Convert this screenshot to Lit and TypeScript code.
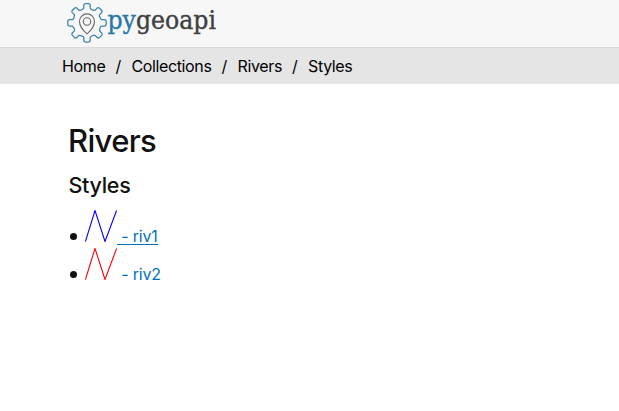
import { LitElement, html, css, svg } from "lit";
import { customElement } from "lit/decorators.js";

// One tooth of the cog plus the arc to the next; repeated eight times.
const cogPath = (() => {
  const pt = (x: number, y: number, a: number) => {
    const c = Math.cos(a), s = Math.sin(a);
    return `${(x * c - y * s).toFixed(2)} ${(x * s + y * c).toFixed(2)}`;
  };
  let d = "";
  for (let i = 0; i < 8; i++) {
    const a = (i * Math.PI) / 4;
    const p = (x: number, y: number) => pt(x, y, a);
    d += `${i ? "L" : "M"}${p(-3.2, -14.6)}L${p(-3.2, -17.6)}Q${p(-3.1, -19)} ${p(-1.8, -19.2)}L${p(1.8, -19.2)}Q${p(3.1, -19)} ${p(3.2, -17.6)}L${p(3.2, -14.6)}Q${p(3.4, -13.4)} ${p(5.4, -13)}`;
    d += `Q${p(7.2, -12.4)} ${pt(-3.2, -14.6, a + Math.PI / 4)}`;
  }
  return d + "Z";
})();

@customElement("app-root")
export class AppRoot extends LitElement {
  static styles = css`
    :host { display: block; height: 411px; overflow: hidden; background: #fff; color: #111; font-family: Inter, "Open Sans", sans-serif; font-size: 16px; }
    .header { height: 47px; box-sizing: border-box; padding-left: 64px; background: #f7f7f7; }
    .logo { display: block; }
    .logotype { font: 26px "DejaVu Serif", serif; stroke-width: 0.4px; }
    .py { fill: #2878a8; stroke: #2878a8; }
    .geo { fill: #404040; stroke: #404040; }
    .crumbs { display: flex; height: 37px; box-sizing: border-box; border-top: 1px solid #dadada; padding: 0 0 0 62px; background: #e5e5e5; color: #000; line-height: 37px; white-space: pre; }
    .crumb { margin-right: 10px; letter-spacing: -0.36px; }
    .sep { width: 6px; margin-right: 10px; }
    main { padding: 39px 0 0 69px; }
    h1 { margin: 0 0 0 -1px; font-size: 31px; font-weight: 450; line-height: 36px; letter-spacing: -0.65px; }
    h2 { margin: 13px 0 0 -0.5px; font-size: 21.5px; font-weight: 500; line-height: 26px; letter-spacing: -0.3px; }
    ul { list-style: none; margin: 12px 0 0; padding: 0; }
    li { display: flex; height: 38px; align-items: flex-start; }
    .dot { width: 7px; height: 7px; border-radius: 50%; background: #111; margin: 23px 8px 0 1px; }
    .line { display: block; width: 32px; height: 32px; }
    a { color: #0071b8; line-height: 20px; margin-top: 16px; height: 19px; box-sizing: border-box; white-space: pre; letter-spacing: -0.2px; text-decoration: none; }
    .active { border-bottom: 1px solid #0071b8; }
  `;

  private row(name: string, color: string, active: boolean) {
    return html`<li><span class="dot"></span><svg class="line" viewBox="0 0 32 32">${svg`<path d="M.4 31.5L10 .5L20 31.5L31.6 .5" fill="none" stroke=${color} stroke-width="1.1"/>`}</svg><a class=${active ? "active" : ""}> - ${name}</a></li>`;
  }

  render() {
    const crumbs = ["Home", "Collections", "Rivers", "Styles"];
    return html`
      <header class="header">
        <svg class="logo" width="160" height="47" viewBox="64 0 160 47">
          <path d=${cogPath} transform="translate(87 22.8)" fill="none" stroke="#3b82aa" stroke-width="1.25" stroke-linejoin="round"/>
          <path d="M87 33.8C82.5 30 79.5 26.2 79.5 21.4A7.5 7.5 0 0 1 94.5 21.4C94.5 26.2 91.5 30 87 33.8Z" fill="none" stroke="#666" stroke-width="1.1"/>
          <circle cx="87" cy="21.5" r="3.7" fill="none" stroke="#666" stroke-width="1.1"/>
          <text class="logotype" x="107.5" y="28.5" textLength="108.5" lengthAdjust="spacingAndGlyphs"><tspan class="py">py</tspan><tspan class="geo">geoapi</tspan></text>
        </svg>
      </header>
      <nav class="crumbs">${crumbs.map((c, i) => html`${i ? html`<span class="sep">/</span>` : ""}<span class="crumb">${c}</span>`)}</nav>
      <main>
        <h1>Rivers</h1>
        <h2>Styles</h2>
        <ul>${this.row("riv1", "#0000ff", true)}${this.row("riv2", "#ff0000", false)}</ul>
      </main>`;
  }
}
